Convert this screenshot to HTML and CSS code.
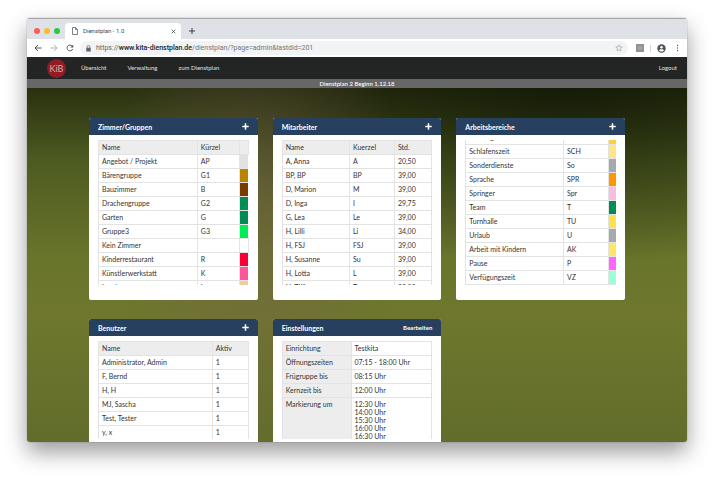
FILE: index.html
```html
<!DOCTYPE html>
<html lang="de">
<head>
  <meta charset="UTF-8">
  <meta name="viewport" content="width=device-width, initial-scale=1.0">
  <title>Dienstplan - 1.0</title>
  <link rel="stylesheet" href="styles.css">
</head>
<body>
  <div class="window">
    <div class="tabstrip">
      <div class="lights"><span class="light red"></span><span class="light yellow"></span><span class="light green"></span></div>
      <div class="tab">
        <svg width="6" height="8" viewBox="0 0 6 8" fill="none" stroke="#5f6368" stroke-width=".8"><path d="M.5.5h3l2 2v5h-5zM3.5.5v2h2"/></svg>
        <span class="tab-title">Dienstplan - 1.0</span>
        <button class="icon-button" aria-label="Tab schließen"><svg width="5" height="5" viewBox="0 0 5 5" stroke="#4a4d51" stroke-width=".8"><path d="M.7.7l3.6 3.6M4.3.7L.7 4.3"/></svg></button>
      </div>
      <button class="icon-button new-tab" aria-label="Neuer Tab"><svg width="6" height="6" viewBox="0 0 6 6" stroke="#3c4043" stroke-width="1"><path d="M3 0v6M0 3h6"/></svg></button>
    </div>
    <div class="toolbar">
      <button class="icon-button" aria-label="Zurück"><svg width="8" height="8" viewBox="0 0 8 8" fill="none" stroke="#54585c" stroke-width="1"><path d="M7.5 4H1M4 1L1 4l3 3"/></svg></button>
      <button class="icon-button" aria-label="Vor"><svg width="8" height="8" viewBox="0 0 8 8" fill="none" stroke="#aeb1b5" stroke-width="1"><path d="M.5 4H7M4 1l3 3-3 3"/></svg></button>
      <button class="icon-button" aria-label="Neu laden"><svg width="8" height="8" viewBox="0 0 8 8" fill="none" stroke="#54585c" stroke-width="1"><path d="M6.7 5A2.9 2.9 0 1 1 6.2 2.1"/><path d="M7.3.6v3H4.3z" fill="#54585c" stroke="none"/></svg></button>
      <div class="address">
        <svg width="5" height="7" viewBox="0 0 5 7"><path d="M.3 2.7h4.4v3.8H.3z" fill="#5f6368"/><path d="M1.2 3V1.7a1.3 1.3 0 0 1 2.6 0V3" fill="none" stroke="#5f6368" stroke-width=".7"/></svg>
        <span class="url">https://<b>www.kita-dienstplan.de</b><span class="path">/dienstplan/?page=admin&amp;lastdid=201</span></span>
        <svg width="8" height="8" viewBox="0 0 8 8" fill="none" stroke="#96999d" stroke-width=".6"><path d="M4 .8l.9 2.100 2.300.2-1.700 1.500.5 2.300L4 5.700l-2 1.200.5-2.300L.8 3.100l2.300-.2z"/></svg>
      </div>
      <span class="extension">W</span>
      <span class="separator"></span>
      <button class="icon-button profile" aria-label="Profil"><svg width="9" height="9" viewBox="0 0 9 9"><circle cx="4.5" cy="4.5" r="4.2" fill="#4f5357"/><circle cx="4.5" cy="3.2" r="1.3" fill="#fff"/><path d="M1.9 6.3c.8-1.5 4.4-1.5 5.2 0-1.2 1.7-4 1.7-5.2 0z" fill="#fff"/></svg></button>
      <button class="icon-button" aria-label="Menü"><svg width="3" height="8" viewBox="0 0 3 8" fill="#54585c"><circle cx="1.5" cy="1.5" r=".7"/><circle cx="1.5" cy="4" r=".7"/><circle cx="1.5" cy="6.5" r=".7"/></svg></button>
    </div>

    <nav class="navbar">
      <a href="#" class="logo">KiB</a>
      <a href="#">Übersicht</a>
      <a href="#">Verwaltung</a>
      <a href="#">zum Dienstplan</a>
      <a href="#" class="logout">Logout</a>
    </nav>
    <div class="subbar">Dienstplan 2 Beginn 1.12.18</div>

    <main class="cards">
      <section class="card">
        <header><h2>Zimmer/Gruppen</h2><button class="icon-button" aria-label="Zimmer hinzufügen"><svg width="7" height="7" viewBox="0 0 7 7" stroke="#fff" stroke-width="1.5"><path d="M3.5.3v6.4M.3 3.5h6.4"/></svg></button></header>
        <div class="scroll">
          <table class="groups">
            <colgroup><col class="name"><col class="short"><col></colgroup>
            <tr><th>Name</th><th>Kürzel</th><th></th></tr>
            <tr><td>Angebot / Projekt</td><td>AP</td><td class="c-light"></td></tr>
            <tr><td>Bärengruppe</td><td>G1</td><td class="c-ochre"></td></tr>
            <tr><td>Bauzimmer</td><td>B</td><td class="c-brown"></td></tr>
            <tr><td>Drachengruppe</td><td>G2</td><td class="c-green"></td></tr>
            <tr><td>Garten</td><td>G</td><td class="c-green"></td></tr>
            <tr><td>Gruppe3</td><td>G3</td><td class="c-lime"></td></tr>
            <tr><td>Kein Zimmer</td><td></td><td></td></tr>
            <tr><td>Kinderrestaurant</td><td>R</td><td class="c-red"></td></tr>
            <tr><td>Künstlerwerkstatt</td><td>K</td><td class="c-pink"></td></tr>
            <tr><td>Landraum</td><td>L</td><td class="c-peach"></td></tr>
          </table>
        </div>
      </section>

      <section class="card">
        <header><h2>Mitarbeiter</h2><button class="icon-button" aria-label="Mitarbeiter hinzufügen"><svg width="7" height="7" viewBox="0 0 7 7" stroke="#fff" stroke-width="1.5"><path d="M3.5.3v6.4M.3 3.5h6.4"/></svg></button></header>
        <div class="scroll">
          <table class="staff">
            <colgroup><col class="name"><col class="short"><col></colgroup>
            <tr><th>Name</th><th>Kuerzel</th><th>Std.</th></tr>
            <tr><td>A, Anna</td><td>A</td><td>20,50</td></tr>
            <tr><td>BP, BP</td><td>BP</td><td>39,00</td></tr>
            <tr><td>D, Marion</td><td>M</td><td>39,00</td></tr>
            <tr><td>D, Inga</td><td>I</td><td>29,75</td></tr>
            <tr><td>G, Lea</td><td>Le</td><td>39,00</td></tr>
            <tr><td>H, Lilli</td><td>Li</td><td>34,00</td></tr>
            <tr><td>H, FSJ</td><td>FSJ</td><td>39,00</td></tr>
            <tr><td>H, Susanne</td><td>Su</td><td>39,00</td></tr>
            <tr><td>H, Lotta</td><td>L</td><td>39,00</td></tr>
            <tr><td>H, Tiffi</td><td>T</td><td>39,00</td></tr>
          </table>
        </div>
      </section>

      <section class="card">
        <header><h2>Arbeitsbereiche</h2><button class="icon-button" aria-label="Arbeitsbereich hinzufügen"><svg width="7" height="7" viewBox="0 0 7 7" stroke="#fff" stroke-width="1.5"><path d="M3.5.3v6.4M.3 3.5h6.4"/></svg></button></header>
        <div class="scroll at-end">
          <table class="areas">
            <colgroup><col class="name"><col class="short"><col></colgroup>
            <tr><td>Planungszeit</td><td>PL</td><td class="c-gold"></td></tr>
            <tr><td>Schlafenszeit</td><td>SCH</td><td class="c-cream"></td></tr>
            <tr><td>Sonderdienste</td><td>So</td><td class="c-gray"></td></tr>
            <tr><td>Sprache</td><td>SPR</td><td class="c-orange"></td></tr>
            <tr><td>Springer</td><td>Spr</td><td class="c-rose"></td></tr>
            <tr><td>Team</td><td>T</td><td class="c-green"></td></tr>
            <tr><td>Turnhalle</td><td>TU</td><td class="c-yellow"></td></tr>
            <tr><td>Urlaub</td><td>U</td><td class="c-gray"></td></tr>
            <tr><td>Arbeit mit Kindern</td><td>AK</td><td class="c-sand"></td></tr>
            <tr><td>Pause</td><td>P</td><td class="c-magenta"></td></tr>
            <tr><td>Verfügungszeit</td><td>VZ</td><td class="c-mint"></td></tr>
          </table>
        </div>
      </section>

      <section class="card">
        <header><h2>Benutzer</h2><button class="icon-button" aria-label="Benutzer hinzufügen"><svg width="7" height="7" viewBox="0 0 7 7" stroke="#fff" stroke-width="1.5"><path d="M3.5.3v6.4M.3 3.5h6.4"/></svg></button></header>
        <div class="scroll short-list">
          <table class="users">
            <colgroup><col class="name"><col></colgroup>
            <tr><th>Name</th><th>Aktiv</th></tr>
            <tr><td>Administrator, Admin</td><td>1</td></tr>
            <tr><td>F, Bernd</td><td>1</td></tr>
            <tr><td>H, H</td><td>1</td></tr>
            <tr><td>MJ, Sascha</td><td>1</td></tr>
            <tr><td>Test, Tester</td><td>1</td></tr>
            <tr><td>y, x</td><td>1</td></tr>
          </table>
        </div>
      </section>

      <section class="card">
        <header><h2>Einstellungen</h2><a href="#">Bearbeiten</a></header>
        <div class="scroll short-list">
          <table class="settings">
            <colgroup><col class="name"><col></colgroup>
            <tr><th>Einrichtung</th><td>Testkita</td></tr>
            <tr><th>Öffnungszeiten</th><td>07:15 - 18:00 Uhr</td></tr>
            <tr><th>Frügruppe bis</th><td>08:15 Uhr</td></tr>
            <tr><th>Kernzeit bis</th><td>12:00 Uhr</td></tr>
            <tr><th>Markierung um</th><td>12:30 Uhr<br>14:00 Uhr<br>15:30 Uhr<br>16:00 Uhr<br>16:30 Uhr</td></tr>
          </table>
        </div>
      </section>
    </main>
  </div>
</body>
</html>
```
FILE: styles.css
```css
* {
  box-sizing: border-box;
}
body {
  margin: 0;
  height: 100vh;
  padding: 18px 27px 36px;
  background: #fff;
  font-family: Lato, sans-serif;
  font-size: 7px;
  line-height: 8px;
  color: #333;
}
a {
  color: inherit;
  text-decoration: none;
}
svg {
  display: block;
  flex: none;
}
.icon-button {
  display: flex;
  flex: none;
  padding: 0;
  border: 0;
  background: none;
}
.window {
  display: flex;
  flex-direction: column;
  height: 100%;
  overflow: hidden;
  border-radius: 3px;
  background: #fff;
  box-shadow: 0 0 1px rgba(0,0,0,0.6), 0 10px 22px rgba(0,0,0,0.4);
}

/* browser chrome */
.tabstrip {
  display: flex;
  align-items: center;
  flex: none;
  height: 21px;
  padding: 4px 6px 0 7px;
  border-top: 1px solid #a5a6a8;
  background: #dee1e6;
  font-family: Roboto, sans-serif;
}
.lights {
  display: flex;
  gap: 4px;
  width: 31px;
}
.light {
  width: 6px;
  height: 6px;
  border-radius: 50%;
}
.red { background: #fc5b57; }
.yellow { background: #fdbc2e; }
.green { background: #28c840; }
.tab {
  display: flex;
  align-items: center;
  gap: 5px;
  width: 116px;
  height: 17px;
  padding: 0 5px 0 7px;
  border-radius: 4px 4px 0 0;
  background: #fff;
  font-size: 6px;
  color: #45494d;
}
.tab-title {
  flex: 1;
}
.new-tab {
  margin-left: 8px;
}
.toolbar {
  display: flex;
  align-items: center;
  flex: none;
  gap: 8px;
  height: 18px;
  padding: 0 8px 0 7px;
  background: #fff;
  font-family: Roboto, sans-serif;
}
.address {
  display: flex;
  align-items: center;
  flex: 1;
  gap: 5px;
  height: 14px;
  margin-left: -2px;
  padding: 0 5px 0 6px;
  border-radius: 7px;
  background: #f1f3f4;
}
.url {
  flex: 1;
  color: #5f6368;
}
.url b {
  font-weight: 500;
  color: #202124;
}
.path {
  color: #70757a;
}
.extension {
  width: 8px;
  height: 8px;
  background: #929292;
  color: #bbb;
  font-size: 5px;
  text-align: center;
}
.separator {
  width: 1px;
  height: 7px;
  margin-left: -2px;
  background: #d5d7da;
}
.profile {
  margin: 0 2px 0 -2px;
}

.navbar {
  display: flex;
  align-items: center;
  flex: none;
  gap: 21px;
  height: 22px;
  padding: 0 10px 0 20px;
  background: #222524;
  color: #e0e0e0;
  font-size: 6px;
}
.logo {
  width: 19px;
  height: 19px;
  margin-right: -6px;
  border-radius: 50%;
  background: #8e1d26;
  color: #e0a8ab;
  font-size: 9px;
  line-height: 19px;
  text-align: center;
}
.logout {
  margin-left: auto;
}
.subbar {
  flex: none;
  height: 9px;
  background: #676767;
  color: #fff;
  font-size: 6px;
  font-weight: 500;
  line-height: 9px;
  text-align: center;
}

.cards {
  display: grid;
  grid-template-columns: repeat(3, 1fr);
  grid-auto-rows: max-content;
  align-content: start;
  flex: 1;
  gap: 19px 15px;
  min-height: 0;
  padding: 30px 62px 0;
  background:
    radial-gradient(ellipse 22% 75% at 35% 35%, rgba(122,92,80,0.4), rgba(122,92,80,0)),
    radial-gradient(ellipse 60% 50% at 82% 0%, rgba(10,16,2,0.65), rgba(10,16,2,0)),
    linear-gradient(#293010, #4d5a20 20%, #69752b 48%, #6e772d 65%, #626d2b);
}
.card {
  overflow: hidden;
  border-radius: 2px;
  background: #fff;
}
.card header {
  display: flex;
  align-items: center;
  justify-content: space-between;
  height: 17px;
  padding: 0 9px;
  background: #274060;
  color: #fff;
}
.card h2 {
  margin: 0;
  font-size: 7px;
}
.card header a {
  font-size: 6px;
  font-weight: 700;
}
.scroll {
  height: 145px;
  margin: 5px 9px 15px;
  overflow: hidden;
}
.short-list {
  height: 98px;
}
.at-end {
  display: flex;
  align-items: flex-end;
}
table {
  width: 100%;
  table-layout: fixed;
  border-collapse: collapse;
}
th, td {
  height: 14px;
  padding: 2px 3px 3px;
  border: 1px solid #e3e3e3;
  text-align: left;
  vertical-align: top;
  font-weight: 400;
}
th {
  background: #ededed;
}
.groups .name { width: 66%; }
.groups .short { width: 28%; }
.staff .name { width: 45%; }
.staff .short { width: 30%; }
.areas .name { width: 65%; }
.areas .short { width: 30%; }
.users .name { width: 76%; }
.settings .name { width: 46%; }

[class^="c-"] { border-right: 0; }
.c-light { background: #e2e2e2; }
.c-ochre { background: #b98500; }
.c-brown { background: #7b3a00; }
.c-green { background: #008c55; }
.c-lime { background: #00ed54; }
.c-red { background: #fb0032; }
.c-pink { background: #ff559b; }
.c-peach { background: #f3cb9b; }
.c-gold { background: #ffd033; }
.c-cream { background: #ffe583; }
.c-gray { background: #a5abad; }
.c-orange { background: #ff9500; }
.c-rose { background: #fbbce1; }
.c-yellow { background: #ffe14d; }
.c-sand { background: #ffe666; }
.c-magenta { background: #ff66ff; }
.c-mint { background: #9cffd6; }
```
